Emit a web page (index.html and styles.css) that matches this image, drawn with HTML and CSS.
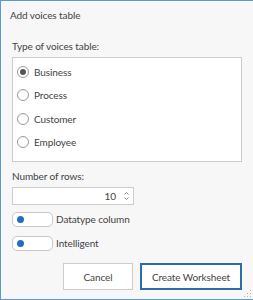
FILE: index.html
```html
<!DOCTYPE html>
<html>

<head>
    <meta http-equiv="Content-Type" content="text/html; charset=utf-8" />
    <link rel="stylesheet" href="styles.css">
</head>

<body>

    <div class="Dialog">
        <div class="Dialog-Title">Add voices table</div>

        <div class="Field-Label">Type of voices table:</div>
        <div class="Type-Box">
            <label class="Radio-Row"><span class="radio checked"></span>Business</label>
            <label class="Radio-Row"><span class="radio"></span>Process</label>
            <label class="Radio-Row"><span class="radio"></span>Customer</label>
            <label class="Radio-Row"><span class="radio"></span>Employee</label>
        </div>

        <div class="Field-Label rows-label">Number of rows:</div>
        <div class="Number-Input">
            <span class="number-value">10</span>
            <span class="spin">
                <svg width="7" height="12" viewBox="0 0 7 12">
                    <path d="M1.5 4.5 L3.5 2.5 L5.5 4.5" fill="none" stroke="#8a8a8a" stroke-width="1" />
                    <path d="M1.5 7.5 L3.5 9.5 L5.5 7.5" fill="none" stroke="#8a8a8a" stroke-width="1" />
                </svg>
            </span>
        </div>

        <div class="Toggle-Row">
            <span class="toggle"><span class="knob"></span></span>
            <span>Datatype column</span>
        </div>
        <div class="Toggle-Row">
            <span class="toggle"><span class="knob"></span></span>
            <span>Intelligent</span>
        </div>

        <div class="Button-Row">
            <button class="Cancel-Button">Cancel</button>
            <button class="Create-Button">Create Worksheet</button>
        </div>

        <svg class="grip" width="8" height="8" viewBox="0 0 8 8">
            <rect x="6" y="0" width="1" height="1" fill="#b5b5b5" />
            <rect x="3" y="3" width="1" height="1" fill="#b5b5b5" />
            <rect x="6" y="3" width="1" height="1" fill="#b5b5b5" />
            <rect x="0" y="6" width="1" height="1" fill="#b5b5b5" />
            <rect x="3" y="6" width="1" height="1" fill="#b5b5b5" />
            <rect x="6" y="6" width="1" height="1" fill="#b5b5b5" />
        </svg>
    </div>

</body>

</html>
```

FILE: styles.css
```css
html,
body {
    margin: 0;
    padding: 0;
}

body {
    font-family: Lato, "Open Sans", sans-serif;
    font-size: 10px;
    letter-spacing: -0.1px;
    color: #444444;
}

.Dialog {
    position: relative;
    box-sizing: border-box;
    width: 253px;
    height: 300px;
    background-color: #f7f7f7;
    border-top: 1px solid #5b9bd5;
    border-left: 1px solid #5b9bd5;
    border-bottom: 1px solid #5b9bd5;
    padding: 0 11px 0 11px;
}

.Dialog-Title {
    margin: 7px 0 0 -2px;
    line-height: 15px;
}

.Field-Label {
    margin-top: 16px;
    line-height: 15px;
}

.Type-Box {
    margin-top: 3px;
    height: 105px;
    background-color: #ffffff;
    border: 1px solid #cccccc;
    display: flex;
    flex-direction: column;
    padding: 6px 0 0 4px;
    box-sizing: border-box;
    gap: 8px;
}

.Radio-Row {
    display: flex;
    align-items: center;
    gap: 5px;
    height: 15.5px;
}

.radio {
    box-sizing: border-box;
    width: 12px;
    height: 12px;
    border: 1px solid #999999;
    border-radius: 50%;
    display: flex;
    align-items: center;
    justify-content: center;
}

.radio.checked:before {
    content: "";
    width: 6px;
    height: 6px;
    border-radius: 50%;
    background-color: #555555;
}

.rows-label {
    margin-top: 7px;
}

.Number-Input {
    margin-top: 3px;
    box-sizing: border-box;
    width: 122px;
    height: 18px;
    background-color: #ffffff;
    border: 1px solid #cccccc;
    display: flex;
    align-items: center;
    justify-content: flex-end;
    padding-right: 3px;
    gap: 7px;
}

.number-value {
    line-height: 15px;
}

.spin svg {
    display: block;
}

.Toggle-Row {
    display: flex;
    align-items: center;
    gap: 3px;
    margin-top: 7px;
    height: 14px;
}

.Toggle-Row+.Toggle-Row {
    margin-top: 10px;
}

.toggle {
    box-sizing: border-box;
    width: 41px;
    height: 15px;
    background-color: #ffffff;
    border: 1px solid #c8c8c8;
    border-radius: 5px;
    display: flex;
    align-items: center;
    padding-left: 4px;
}

.knob {
    width: 7px;
    height: 7px;
    border-radius: 50%;
    background-color: #1f6fc5;
}

.Button-Row {
    display: flex;
    justify-content: flex-end;
    gap: 7px;
    margin-top: 13px;
}

.Cancel-Button,
.Create-Button {
    font-family: Lato, "Open Sans", sans-serif;
    font-size: 10px;
    letter-spacing: -0.1px;
    color: #444444;
    background-color: #ffffff;
    height: 27px;
    box-sizing: border-box;
    padding: 0;
}

.Cancel-Button {
    width: 70px;
    border: 1px solid #cccccc;
}

.Create-Button {
    width: 102px;
    border: 2px solid #2b6cb0;
}

.grip {
    position: absolute;
    right: 1px;
    bottom: 1px;
}
```
